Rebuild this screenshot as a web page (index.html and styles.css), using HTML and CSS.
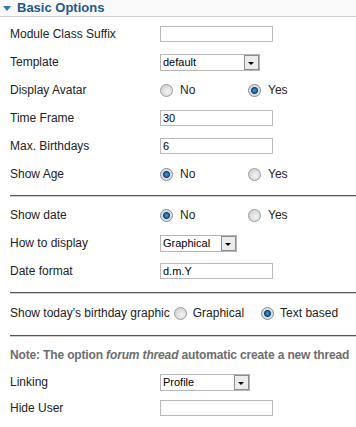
FILE: index.html
```html
<!DOCTYPE html>
<html lang="en">
<head>
    <meta charset="UTF-8">
    <title>Basic Options</title>
    <link rel="stylesheet" href="styles.css">
</head>
<body>
<div class="panel">
    <h3 class="panel-title"><span class="toggle"></span>Basic Options</h3>

    <div class="section">
        <div class="row">
            <label class="key">Module Class Suffix</label>
            <input type="text" class="text">
        </div>
        <div class="row">
            <label class="key">Template</label>
            <span class="select w100"><select><option>default</option></select><span class="arrow"></span></span>
        </div>
        <div class="row">
            <label class="key">Display Avatar</label>
            <label class="opt"><input type="radio" name="avatar">No</label>
            <label class="opt"><input type="radio" name="avatar" checked>Yes</label>
        </div>
        <div class="row">
            <label class="key">Time Frame</label>
            <input type="text" class="text" value="30">
        </div>
        <div class="row">
            <label class="key">Max. Birthdays</label>
            <input type="text" class="text" value="6">
        </div>
        <div class="row">
            <label class="key">Show Age</label>
            <label class="opt"><input type="radio" name="age" checked>No</label>
            <label class="opt"><input type="radio" name="age">Yes</label>
        </div>
    </div>

    <hr>

    <div class="section">
        <div class="row">
            <label class="key">Show date</label>
            <label class="opt"><input type="radio" name="date" checked>No</label>
            <label class="opt"><input type="radio" name="date">Yes</label>
        </div>
        <div class="row">
            <label class="key">How to display</label>
            <span class="select w77"><select><option>Graphical</option></select><span class="arrow"></span></span>
        </div>
        <div class="row">
            <label class="key">Date format</label>
            <input type="text" class="text" value="d.m.Y">
        </div>
    </div>

    <hr>

    <div class="section">
        <div class="row row-tall">
            <span class="inline-key">Show today's birthday graphic</span>
            <label class="opt-inline"><input type="radio" name="graphic">Graphical</label>
            <label class="opt-inline"><input type="radio" name="graphic" checked>Text based</label>
        </div>
    </div>

    <hr>

    <div class="section">
        <div class="row">
            <p class="note">Note: The option <em>forum thread</em> automatic create a new thread</p>
        </div>
        <div class="row row-sm">
            <label class="key">Linking</label>
            <span class="select w90"><select><option>Profile</option></select><span class="arrow"></span></span>
        </div>
        <div class="row row-sm">
            <label class="key">Hide User</label>
            <input type="text" class="text">
        </div>
    </div>
</div>
</body>
</html>
```

FILE: styles.css
```css
body {
    margin: 0;
    background: #fff;
    font-family: "Liberation Sans", Arial, sans-serif;
    font-size: 12px;
    color: #222;
}
.panel {
    width: 356px;
}
.panel-title {
    margin: 0;
    height: 16px;
    line-height: 14px;
    background: #f9f9f9;
    border-bottom: 1px solid #cfcfcf;
    font-size: 13px;
    font-weight: bold;
    color: #1b5b8d;
    display: flex;
    align-items: center;
}
.toggle {
    width: 0;
    height: 0;
    border-left: 4px solid transparent;
    border-right: 4px solid transparent;
    border-top: 5px solid #2a78b0;
    margin: 0 6px 0 3px;
}
.section {
    padding-left: 10px;
}
.section:first-of-type {
    padding-top: 3px;
}
.row {
    height: 28px;
    display: flex;
    align-items: center;
    white-space: nowrap;
}
.row-tall {
    height: 30px;
}
.row-sm {
    height: 26px;
}
.key {
    width: 150px;
    flex: none;
}
input.text {
    width: 113px;
    height: 16px;
    box-sizing: border-box;
    border: 1px solid #b9b9b9;
    padding: 0 2px;
    margin: 0;
    font-family: "Liberation Sans", Arial, sans-serif;
    font-size: 11px;
    color: #000;
}
.select {
    position: relative;
    display: inline-block;
    height: 17px;
}
.select select {
    appearance: none;
    -webkit-appearance: none;
    width: 100%;
    height: 17px;
    box-sizing: border-box;
    border: 1px solid #b5b5b5;
    border-radius: 0;
    background: #fff;
    padding: 0 2px;
    margin: 0;
    font-family: "Liberation Sans", Arial, sans-serif;
    font-size: 11px;
    color: #000;
}
.select .arrow {
    position: absolute;
    top: 1px;
    right: 1px;
    width: 13px;
    height: 13px;
    border: 1px solid #8c8c8c;
    background: #ececec;
}
.select .arrow::after {
    content: "";
    position: absolute;
    left: 3px;
    top: 6px;
    border-left: 3px solid transparent;
    border-right: 3px solid transparent;
    border-top: 3px solid #000;
}
.w100 { width: 100px; }
.w77 { width: 77px; }
.w90 { width: 90px; }
.opt {
    width: 88px;
    display: flex;
    align-items: center;
}
.opt-inline {
    display: flex;
    align-items: center;
    flex: none;
}
.opt-inline + .opt-inline {
    margin-left: 17px;
}
.inline-key {
    flex: none;
    margin-right: 4px;
}
input[type="radio"] {
    appearance: none;
    -webkit-appearance: none;
    width: 13px;
    height: 13px;
    margin: 0 7px 0 0;
    border: 1px solid #9a9a9a;
    border-radius: 50%;
    box-sizing: border-box;
    background: radial-gradient(circle at 60% 60%, #f4f4f4 0, #dcdcdc 55%, #c8c8c8 100%);
    flex: none;
}
.opt-inline input[type="radio"] {
    margin-right: 6px;
}
input[type="radio"]:checked {
    border-color: #7a8a99;
    background: radial-gradient(circle, #4aa0dc 0, #1e6aa8 2px, #12406a 3px, #dcdcdc 4px, #ececec 100%);
}
hr {
    margin: 7px 0 4px 10px;
    height: 0;
    border: 0;
    border-top: 1px solid #555;
    border-bottom: 1px solid #d0d0d0;
}
.note {
    margin: 0;
    font-weight: bold;
    color: #6d6d6d;
    letter-spacing: -0.15px;
}
```
